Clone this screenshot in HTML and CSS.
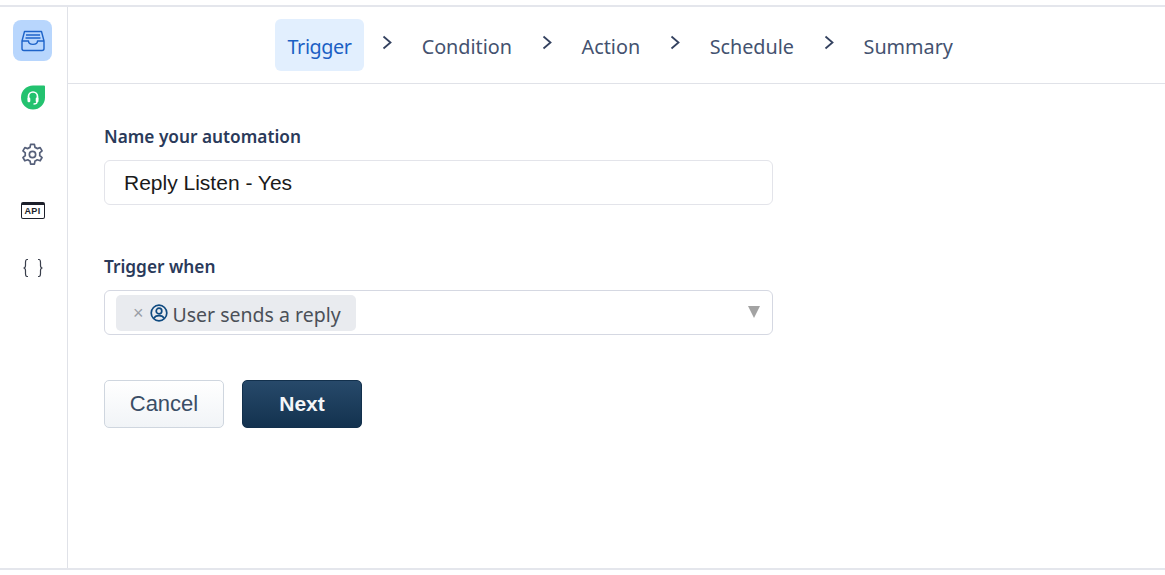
FILE: index.html
```html
<!DOCTYPE html>
<html>

<head>
	<link rel="stylesheet" href="styles.css">
</head>

<body>
	<div class="app">
		<div class="sidebar">
			<div class="sideItem active">
				<svg width="28" height="24" viewBox="0 0 28 24" fill="none" stroke="#1d63c9" stroke-width="1.400" stroke-linejoin="round">
					<path d="M5.500 2.500h17l2.500 9.500v7.500a2 2 0 0 1-2 2h-18a2 2 0 0 1-2-2v-7.500z" />
					<path d="M3 12h6.500c0 4.500 9 4.500 9 0H25" />
					<path d="M7 6h14M6.500 9h15" />
				</svg>
			</div>
			<div class="sideItem">
				<svg width="26" height="26" viewBox="0 -0.500 26 26">
					<path d="M13 1h11a1 1 0 0 1 1 1v11a12 12 0 1 1-12-12z" fill="#23c26f" />
					<path d="M8.500 15v-3a4.500 4.500 0 0 1 9 0v3" fill="none" stroke="#fff" stroke-width="1.700" />
					<rect x="7.500" y="13" width="2.800" height="4.800" rx="1.200" fill="#fff" />
					<rect x="15.700" y="13" width="2.800" height="4.800" rx="1.200" fill="#fff" />
					<path d="M17 17.500c0 1.500-2 2-3.500 2" fill="none" stroke="#fff" stroke-width="1.300" />
				</svg>
			</div>
			<div class="sideItem">
				<svg width="27" height="27" viewBox="0 0 24 24" fill="none" stroke="#56607a" stroke-width="1.500" stroke-linejoin="round">
					<path d="M10.300 2h3.400l.5 2.700a7.800 7.800 0 0 1 2 1.100l2.600-.9 1.700 2.900-2.100 1.800a7.800 7.800 0 0 1 0 2.300l2.100 1.800-1.700 2.900-2.600-.9a7.800 7.800 0 0 1-2 1.100l-.5 2.700h-3.400l-.5-2.700a7.800 7.800 0 0 1-2-1.100l-2.600.9-1.700-2.900 2.100-1.800a7.800 7.800 0 0 1 0-2.300L3.500 7.800l1.700-2.900 2.600.9a7.800 7.800 0 0 1 2-1.100z" transform="translate(0 1)" />
					<circle cx="12" cy="12" r="2.800" />
				</svg>
			</div>
			<div class="sideItem">
				<div class="apiIcon"><span>API</span></div>
			</div>
			<div class="sideItem">
				<svg width="22" height="20" viewBox="0 0 22 20" fill="none" stroke="#3a3f4c" stroke-width="1.200">
					<path d="M6 1.500H5C3.500 1.500 3.500 3 3.500 4.500v3c0 1.500-.8 2.500-2 2.500 1.200 0 2 1 2 2.500v3c0 1.500 0 3 1.500 3h1" />
					<path d="M16 1.500h1c1.500 0 1.500 1.500 1.500 3v3c0 1.500.8 2.500 2 2.500-1.200 0-2 1-2 2.500v3c0 1.500 0 3-1.500 3h-1" />
				</svg>
			</div>
		</div>
		<div class="main">
			<div class="steps">
				<span class="step current">Trigger</span>
				<svg class="chev" width="10" height="15" viewBox="0 0 10 15"><path d="M1.500 1.500 8.500 7.500l-7 6" /></svg>
				<span class="step">Condition</span>
				<svg class="chev" width="10" height="15" viewBox="0 0 10 15"><path d="M1.500 1.500 8.500 7.500l-7 6" /></svg>
				<span class="step">Action</span>
				<svg class="chev" width="10" height="15" viewBox="0 0 10 15"><path d="M1.500 1.500 8.500 7.500l-7 6" /></svg>
				<span class="step">Schedule</span>
				<svg class="chev" width="10" height="15" viewBox="0 0 10 15"><path d="M1.500 1.500 8.500 7.500l-7 6" /></svg>
				<span class="step">Summary</span>
			</div>
			<div class="form">
				<div class="fieldLabel">Name your automation</div>
				<input class="nameInput" type="text" value="Reply Listen - Yes" />
				<div class="fieldLabel second">Trigger when</div>
				<div class="selectBox">
					<div class="chip">
						<span class="chipX">×</span>
						<svg width="18" height="18" viewBox="0 0 18 18" fill="none" stroke="#0f4a80" stroke-width="1.700">
							<circle cx="9" cy="9" r="7.800" />
							<circle cx="9" cy="7" r="2.800" />
							<path d="M3.800 14.500c1-2.200 3-2.900 5.200-2.900s4.200.7 5.200 2.900" />
						</svg>
						<span class="chipText">User sends a reply</span>
					</div>
					<div class="arrow"></div>
				</div>
				<div class="buttons">
					<button class="btn cancel">Cancel</button>
					<button class="btn next">Next</button>
				</div>
			</div>
		</div>
	</div>
</body>

</html>
```
FILE: styles.css
```css
html,
body {
	margin: 0;
	padding: 0;
	height: 100%;
	background-color: #fff;
	overflow: hidden;
}

.app {
	display: flex;
	box-sizing: border-box;
	height: 565px;
	margin-top: 5px;
	border-top: solid 2px #e4e6ec;
	border-bottom: solid 2px #e4e6ec;
	font-family: "Noto Sans", sans-serif;
}

.sidebar {
	box-sizing: border-box;
	width: 68px;
	flex-shrink: 0;
	border-right: solid 1px #e0e2e8;
	padding: 13px 0 0 13px;
	display: flex;
	flex-direction: column;
}

.sideItem {
	width: 39px;
	height: 41px;
	margin-bottom: 15.800px;
	border-radius: 8px;
	display: flex;
	align-items: center;
	justify-content: center;
}

.active {
	background-color: #b8d6fd;
}

.apiIcon {
	box-sizing: border-box;
	width: 24px;
	height: 17px;
	border: solid 1.500px #1c1f2a;
	border-top-width: 3px;
	border-radius: 2px;
	display: flex;
	align-items: center;
	justify-content: center;
}

.apiIcon span {
	font-family: "Liberation Sans", sans-serif;
	font-size: 9px;
	font-weight: bold;
	color: #1c1f2a;
	line-height: 9px;
	letter-spacing: .3px;
}

.main {
	flex: 1;
}

.steps {
	box-sizing: border-box;
	height: 77px;
	border-bottom: solid 1px #e0e2e8;
	padding: 12px 0 0 207px;
	display: flex;
	align-items: flex-start;
}

.step {
	height: 52px;
	line-height: 56px;
	padding: 0 12px;
	font-size: 19.800px;
	color: #44526f;
	border-radius: 6px;
}

.current {
	background-color: #e2effe;
	color: #1b5fc4;
	padding: 0 12.500px;
	letter-spacing: -.4px;
}

.chev {
	margin: 16px 17.750px 0;
	fill: none;
	stroke: #33415f;
	stroke-width: 1.800;
}

.form {
	padding: 42px 0 0 36px;
	width: 669px;
}

.fieldLabel {
	font-size: 17.250px;
	font-weight: 600;
	color: #2a3a5a;
	line-height: 22px;
	margin-bottom: 12px;
}

.second {
	margin-top: 51px;
}

.nameInput {
	box-sizing: border-box;
	display: block;
	width: 669px;
	height: 45px;
	padding: 0 19px;
	border: solid 1px #e3e4ea;
	border-radius: 6px;
	outline: none;
	font-family: "Liberation Sans", sans-serif;
	font-size: 21px;
	color: #1a1a1a;
}

.selectBox {
	box-sizing: border-box;
	width: 669px;
	height: 45px;
	border: solid 1px #d5d8e2;
	border-radius: 6px;
	padding: 4px 11px;
	display: flex;
	align-items: flex-start;
	justify-content: space-between;
}

.chip {
	height: 36px;
	box-sizing: border-box;
	padding: 0 15px 0 17px;
	background-color: #e9ebef;
	border-radius: 5px;
	display: flex;
	align-items: center;
}

.chipX {
	font-size: 18px;
	color: #9a9ea6;
	margin-right: 6px;
	font-family: "Liberation Sans", sans-serif;
}

.chipText {
	font-size: 19.500px;
	color: #4b5058;
	margin: 2px 0 0 5px;
}

.arrow {
	width: 0;
	height: 0;
	margin: 11px 1px 0 0;
	border-left: 6px solid transparent;
	border-right: 6px solid transparent;
	border-top: 12px solid #a3a3a3;
}

.buttons {
	display: flex;
	gap: 18px;
	margin-top: 45px;
}

.btn {
	box-sizing: border-box;
	width: 120px;
	height: 48px;
	border-radius: 5px;
	font-family: "Liberation Sans", sans-serif;
	font-size: 22px;
}

.cancel {
	background: linear-gradient(#fff, #f1f4f7);
	border: solid 1px #cfd6df;
	color: #3a4e66;
}

.next {
	background: linear-gradient(#27496a, #13324f);
	border: solid 1px #12304c;
	color: #f4f6f8;
	font-size: 21px;
	font-weight: bold;
}
```
